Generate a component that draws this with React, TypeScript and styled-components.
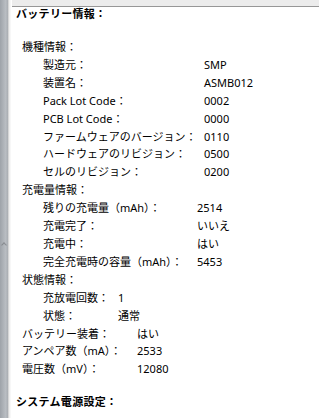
import React from 'react';
import styled, { createGlobalStyle } from 'styled-components';

const GlobalStyle = createGlobalStyle`
  html, body {
    margin: 0;
    padding: 0;
    background: #ffffff;
  }
  body {
    font-family: "Noto Sans", "Noto Sans CJK JP", sans-serif;
    color: #000;
  }
`;

const Window = styled.div`
  display: flex;
  width: 319px;
  height: 418px;
  overflow: hidden;
`;

const Splitter = styled.div`
  position: relative;
  flex: 0 0 8px;
  background: linear-gradient(to right, #9ea3a9, #b9bdc2 70%, #a9adb2);
  border-right: 1px solid #d6d6d6;
  box-shadow: 1px 0 0 #efefef, 2px 0 0 #f7f7f7;
`;

const Grip = styled.span`
  position: absolute;
  left: 2px;
  top: 243px;
  width: 3px;
  height: 3px;
  border-left: 1px solid #6d7075;
  border-top: 1px solid #6d7075;
  transform: rotate(45deg);
  opacity: 0.6;
`;

const Pane = styled.div`
  flex: 1;
  display: flex;
  flex-direction: column;
  margin-left: 3px;
`;

const TopBar = styled.div`
  height: 6px;
  background: #ececec;
  border-bottom: 1px solid #979797;
`;

const Body = styled.div`
  padding-left: 4px;
  font-size: 11px;
`;

const Heading = styled.h2<{ $gap: number }>`
  margin: ${p => p.$gap}px 0 0 0;
  font-size: 11px;
  font-weight: bold;
  line-height: 13px;
  letter-spacing: 0.3px;
`;

const Section = styled.div<{ $top?: number }>`
  margin-top: ${p => p.$top ?? 0}px;
`;

const Group = styled.div`
  line-height: 17.9px;
  padding-left: 6px;
`;

const Table = styled.div<{ $indent: number; $label: number }>`
  display: grid;
  grid-template-columns: ${p => p.$label}px auto;
  padding-left: ${p => p.$indent}px;
  line-height: 17.9px;
  white-space: nowrap;
`;

const Label = styled.span``;

const Value = styled.span``;

type Row = [string, string];

const model: Row[] = [
  ['製造元：', 'SMP'],
  ['装置名：', 'ASMB012'],
  ['Pack Lot Code：', '0002'],
  ['PCB Lot Code：', '0000'],
  ['ファームウェアのバージョン：', '0110'],
  ['ハードウェアのリビジョン：', '0500'],
  ['セルのリビジョン：', '0200'],
];

const charge: Row[] = [
  ['残りの充電量（mAh）：', '2514'],
  ['充電完了：', 'いいえ'],
  ['充電中：', 'はい'],
  ['完全充電時の容量（mAh）：', '5453'],
];

const health: Row[] = [
  ['充放電回数：', '1'],
  ['状態：', '通常'],
];

const battery: Row[] = [
  ['バッテリー装着：', 'はい'],
  ['アンペア数（mA）：', '2533'],
  ['電圧数（mV）：', '12080'],
];

function Rows({ rows, indent, label }: { rows: Row[]; indent: number; label: number }) {
  return (
    <Table $indent={indent} $label={label}>
      {rows.map(([k, v]) => (
        <React.Fragment key={k}>
          <Label>{k}</Label>
          <Value>{v}</Value>
        </React.Fragment>
      ))}
    </Table>
  );
}

export default function App() {
  return (
    <>
      <GlobalStyle />
      <Window>
        <Splitter>
          <Grip />
        </Splitter>
        <Pane>
          <TopBar />
          <Body>
            <Heading $gap={0}>バッテリー情報：</Heading>
            <Section $top={18}>
              <Group>機種情報：</Group>
              <Rows rows={model} indent={27} label={161} />
              <Group>充電量情報：</Group>
              <Rows rows={charge} indent={27} label={154} />
              <Group>状態情報：</Group>
              <Rows rows={health} indent={27} label={75} />
              <Rows rows={battery} indent={6} label={115} />
            </Section>
            <Heading $gap={17}>システム電源設定：</Heading>
          </Body>
        </Pane>
      </Window>
    </>
  );
}
